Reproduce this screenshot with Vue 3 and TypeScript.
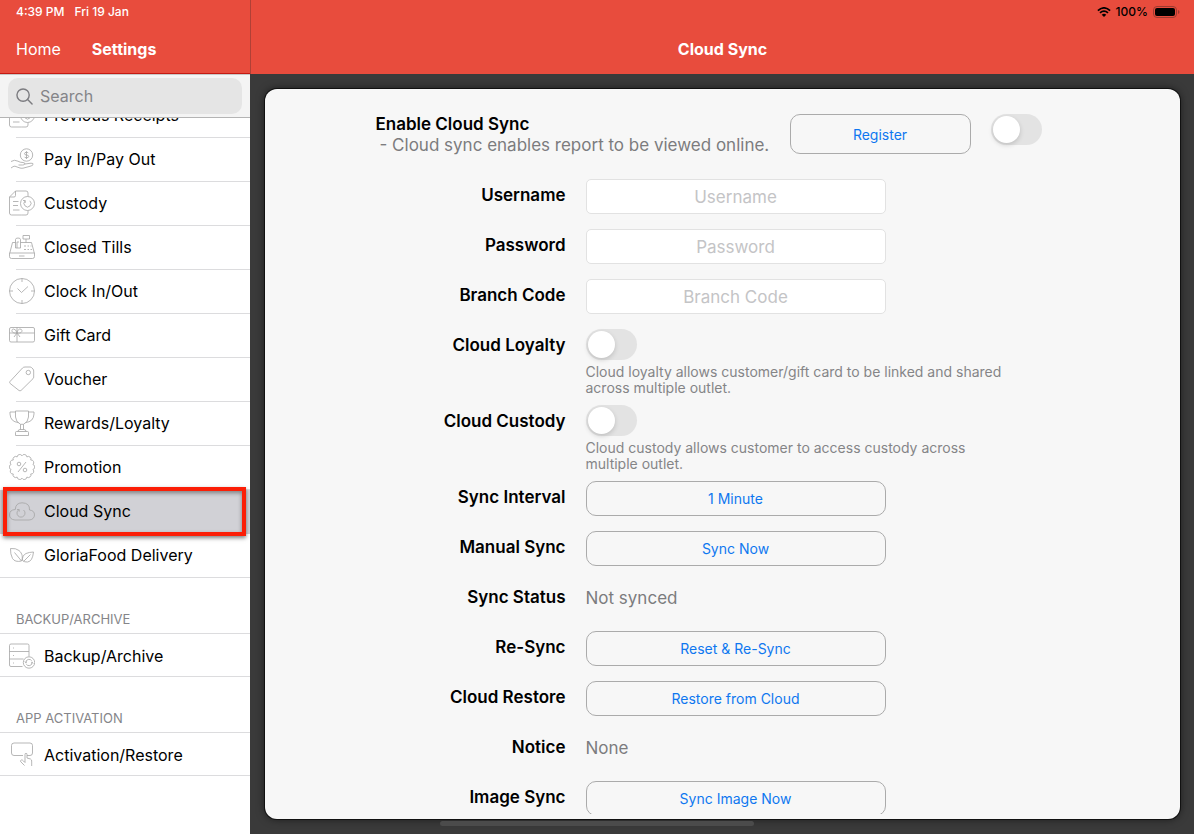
<script setup lang="ts">
import { ref } from 'vue'

interface MenuItem {
  label: string
  icon: string
  active?: boolean
}

interface MenuGroup {
  title?: string
  items: MenuItem[]
}

interface FormRow {
  id: string
  label: string
  kind: 'input' | 'switch' | 'button' | 'text'
  text: string
}

const circle = (cx: number, cy: number, r: number): string =>
  `M${cx - r} ${cy}a${r} ${r} 0 1 0 ${2 * r} 0a${r} ${r} 0 1 0 ${-2 * r} 0`

const scallop = (cx: number, cy: number, r: number, lobes: number): string => {
  const point = (i: number): string => {
    const a = (i / lobes) * 2 * Math.PI - Math.PI / 2
    return `${(cx + r * Math.cos(a)).toFixed(2)} ${(cy + r * Math.sin(a)).toFixed(2)}`
  }
  let d = `M${point(0)}`
  for (let i = 1; i <= lobes; i++) d += `A2.6 2.6 0 0 1 ${point(i)}`
  return d
}

const documentIcon =
  'M12.5 25H2.5Q.5 25 .5 23V7L6.5 1H17Q19 1 19 3V6.500M6.500 1V5.500Q6.500 7 5 7H.5M19 20.500V23Q19 25 17 25H12.500M4 11.500H9.500M4 15.500H9M4 20H10.500' +
  circle(18.5, 13.5, 7) +
  'M16.200 10.800A3.500 3.500 0 1 0 20.800 10.800M16.200 13V10.500H14'

const groups: MenuGroup[] = [
  {
    items: [
      { label: 'Previous Receipts', icon: documentIcon },
      {
        label: 'Pay In/Pay Out',
        icon:
          circle(17.5, 9, 6.2) +
          'M19.500 7.200Q19.200 6.300 17.500 6.300Q15.500 6.300 15.500 7.700Q15.500 9 17.500 9Q19.700 9 19.700 10.400Q19.700 11.800 17.500 11.800Q15.700 11.800 15.400 10.800M17.500 5.200V13M2 15.500Q5.500 13.200 9 15.200Q11 16.500 14 16.500Q16.500 16.700 15.800 18.200Q15.400 19 13.500 19H9.500M16 18L22 17.200Q24.700 17 24 18.700Q23.500 19.700 21 20.300L14 22.200Q12 22.500 10 21.700L6 20.200Q5 20 4 20.700L2 22'
      },
      { label: 'Custody', icon: documentIcon },
      {
        label: 'Closed Tills',
        icon: 'M.5 19H25.500V22.500Q25.500 24.500 23.500 24.500H2.500Q.5 24.500 .5 22.500ZM.8 19L3.500 8.500H6.500M11.500 8.500H22.500L25.300 19M6.500 14V5.500Q6.500 4 9 4Q11.500 4 11.500 5.500V14ZM8 14V8H10M14 1.500H20.500V5H14ZM17 5V8.500M10 22H15.500M15 12H17M18.500 12H20M21.500 12H22.500M15 15.500H17M18.500 15.500H20M21.500 15.500H23'
      },
      {
        label: 'Clock In/Out',
        icon: circle(13, 13, 12.5) + 'M13 .5V4M13 22V25.500M.5 13H4M22 13H25.500M8.500 10.500L12.500 14.500L19 8.500'
      },
      {
        label: 'Gift Card',
        icon: 'M2 5.500H24Q25.500 5.500 25.500 7V18.500Q25.500 20 24 20H2Q.5 20 .5 18.500V7Q.5 5.500 2 5.500ZM.5 11H25.500M8 5.500V20M8 11C2 12 2 7 4.500 7Q7 7 8 11C9 7 10.500 7 11 7C14 7 14 12 8 11M8 11L5 15M8 11L11 15'
      },
      {
        label: 'Voucher',
        icon: 'M1 15.500L13.500 2Q14.500 1 16 1H21Q22 1 22.700 1.700L24 3Q24.700 4 24.700 5V11Q24.700 12 24 12.700L12 24.500Q11 25.200 10 24.500L1.200 17.500Q.2 16.500 1 15.500Z' + circle(19.3, 6.5, 2.2)
      },
      {
        label: 'Rewards/Loyalty',
        icon: 'M6.500 1H19.500V7Q19 12.500 14.500 14.300V19.500M6.500 1V7Q7 12.500 11.500 14.300V19.500M6.500 2H1V4Q1.500 12 9.500 12.500M19.500 2H25V4Q24.500 12 16.500 12.500M11.500 14.300H14.500M9 21.500Q9 19.500 11 19.500H15Q17 19.500 17 21.500M7.500 21.500H18.500Q19.500 21.500 19.500 22.500V25.500H6.500V22.500Q6.500 21.500 7.500 21.500Z'
      },
      {
        label: 'Promotion',
        icon: scallop(13, 13, 11.2, 14) + circle(10, 10, 1.8) + circle(16, 16, 1.8) + 'M17 8L9 18'
      },
      {
        label: 'Cloud Sync',
        icon:
          'M6 22H20C23.500 22 25.500 19.500 25.500 17Q25.500 12.500 20.500 12Q21 5 13 4.800Q6.500 5 6.300 11.500Q.5 11.800 .5 17Q.7 21.500 6 22Z' +
          'M9.500 12A4 4 0 1 0 14.500 12M8 11.500H10.200V13.700',
        active: true
      },
      {
        label: 'GloriaFood Delivery',
        icon: 'M1.500 6.500Q7 6 10 8.500C13.500 11.500 14 15.500 12.500 19Q6 20.500 3.500 16.500Q1.200 12 1.500 6.500ZM5.500 10.500L12.500 19M24.500 10Q23.500 19.500 18.500 20Q15.500 20.300 13.500 18.500Q13 13.500 17 11.500Q20 10.200 24.500 10ZM21.500 12.500L14.500 19.500'
      }
    ]
  },
  {
    title: 'BACKUP/ARCHIVE',
    items: [
      {
        label: 'Backup/Archive',
        icon:
          'M13.500 23.500H2Q.5 23.500 .5 22V2.500Q.5 1 2 1H18.500Q20 1 20 2.500V13.500M.5 8.500H20M.5 16H14.500M4 5H5M4 12.500H5M4 20H5' +
          circle(20, 19.5, 5.7) +
          'M16.800 19.500A3.200 3.200 0 0 1 22.800 18M23.200 19.500A3.200 3.200 0 0 1 17.200 21M15.800 18.500L16.800 19.800L18 18.700M22 20.300L23.200 19.200L24.200 20.500'
      }
    ]
  },
  {
    title: 'APP ACTIVATION',
    items: [
      {
        label: 'Activation/Restore',
        icon: 'M14 13.500H5Q2.500 13.500 2.500 11V3.500Q2.500 1 5 1H21Q23.500 1 23.500 3.500V11Q23.500 13.500 21 13.500H18M15.500 23.500L11.700 19.700Q11 18.500 12.300 18Q13.500 17.700 14.500 19L16 20.500V12.500Q16 11.300 17 11.300Q18 11.300 18 12.500V16L21.500 17Q23 17.500 22.700 20V24'
      }
    ]
  }
]

const rows: FormRow[] = [
  { id: 'username', label: 'Username', kind: 'input', text: 'Username' },
  { id: 'password', label: 'Password', kind: 'input', text: 'Password' },
  { id: 'branch', label: 'Branch Code', kind: 'input', text: 'Branch Code' },
  {
    id: 'loyalty',
    label: 'Cloud Loyalty',
    kind: 'switch',
    text: 'Cloud loyalty allows customer/gift card to be linked and shared across multiple outlet.'
  },
  {
    id: 'custody',
    label: 'Cloud Custody',
    kind: 'switch',
    text: 'Cloud custody allows customer to access custody across multiple outlet.'
  },
  { id: 'interval', label: 'Sync Interval', kind: 'button', text: '1 Minute' },
  { id: 'manual', label: 'Manual Sync', kind: 'button', text: 'Sync Now' },
  { id: 'status', label: 'Sync Status', kind: 'text', text: 'Not synced' },
  { id: 'resync', label: 'Re-Sync', kind: 'button', text: 'Reset & Re-Sync' },
  { id: 'restore', label: 'Cloud Restore', kind: 'button', text: 'Restore from Cloud' },
  { id: 'notice', label: 'Notice', kind: 'text', text: 'None' },
  { id: 'image', label: 'Image Sync', kind: 'button', text: 'Sync Image Now' }
]

const search = ref('')
const fields = ref<Record<string, string>>({ username: '', password: '', branch: '' })
const switches = ref<Record<string, boolean>>({ enable: false, loyalty: false, custody: false })
</script>

<template>
  <div class="screen">
    <aside class="sidebar">
      <header class="bar">
        <div class="status"><span>4:39 PM</span><span>Fri 19 Jan</span></div>
        <div class="nav">
          <a class="home" href="#home">Home</a>
          <h1 class="heading">Settings</h1>
        </div>
      </header>
      <div class="search">
        <label class="search-box">
          <svg class="search-icon" viewBox="0 0 18 18" aria-hidden="true">
            <circle cx="7.500" cy="7.500" r="6.500" />
            <path d="M12.300 12.300L17 17" />
          </svg>
          <input v-model="search" class="search-input" type="text" placeholder="Search" aria-label="Search" />
        </label>
      </div>
      <nav class="menu">
        <div class="menu-content">
          <section v-for="(group, g) in groups" :key="g" class="group">
            <h2 v-if="group.title" class="group-title">{{ group.title }}</h2>
            <ul class="list">
              <li v-for="item in group.items" :key="item.label" class="item" :class="{ active: item.active }">
                <a class="link" href="#">
                  <svg class="icon" viewBox="0 0 26 26" aria-hidden="true"><path :d="item.icon" /></svg>
                  <span class="link-text">{{ item.label }}</span>
                </a>
              </li>
            </ul>
          </section>
        </div>
      </nav>
    </aside>

    <main class="main">
      <header class="bar">
        <div class="status right">
          <svg class="wifi" viewBox="0 0 14 10" aria-hidden="true">
            <path d="M.9 3.600Q7-1.800 13.100 3.600M3 5.900Q7 2.400 11 5.900" />
            <path class="solid" d="M4.700 7.700Q7 5.900 9.300 7.700L7 10Z" />
          </svg>
          <span class="percent">100%</span>
          <svg class="battery" viewBox="0 0 27 12" aria-hidden="true">
            <rect class="shell" x=".5" y=".5" width="23" height="11" rx="3.500" />
            <rect x="2" y="2" width="20" height="8" rx="2" />
            <path class="tip" d="M25 4Q26.500 4.500 26.500 6Q26.500 7.500 25 8Z" />
          </svg>
        </div>
        <div class="nav centered"><h1 class="heading">Cloud Sync</h1></div>
      </header>
      <div class="stage">
        <div class="card">
          <form class="form" @submit.prevent>
            <div class="enable">
              <div class="enable-text">
                <label class="enable-title" for="enable">Enable Cloud Sync</label>
                <p class="enable-note">- Cloud sync enables report to be viewed online.</p>
              </div>
              <button class="button register" type="button">Register</button>
              <input id="enable" v-model="switches.enable" class="switch" type="checkbox" role="switch" />
            </div>
            <div v-for="row in rows" :key="row.id" class="row" :class="{ tall: row.kind === 'switch' }">
              <label v-if="row.kind === 'input' || row.kind === 'switch'" class="label" :for="row.id">{{ row.label }}</label>
              <span v-else :id="row.id + '-label'" class="label">{{ row.label }}</span>
              <input
                v-if="row.kind === 'input'"
                :id="row.id"
                v-model="fields[row.id]"
                class="field"
                :type="row.id === 'password' ? 'password' : 'text'"
                :placeholder="row.text"
              />
              <div v-else-if="row.kind === 'switch'">
                <input :id="row.id" v-model="switches[row.id]" class="switch" type="checkbox" role="switch" />
                <p class="help">{{ row.text }}</p>
              </div>
              <button v-else-if="row.kind === 'button'" class="button" type="button" :aria-describedby="row.id + '-label'">
                {{ row.text }}
              </button>
              <span v-else class="value">{{ row.text }}</span>
            </div>
          </form>
        </div>
      </div>
    </main>
    <div class="home-indicator"></div>
  </div>
</template>

<style>
body {
  margin: 0;
}
</style>

<style scoped>
* {
  box-sizing: border-box;
}

.screen {
  display: grid;
  grid-template-columns: 250px minmax(0, 1fr);
  height: 100vh;
  overflow: hidden;
  background: #3a3a3a;
  color: #000;
  font-family: Inter, "Liberation Sans", sans-serif;
  font-size: 16px;
}

.sidebar,
.main {
  display: flex;
  flex-direction: column;
  min-height: 0;
}

.sidebar {
  background: #fff;
}

.bar {
  flex: none;
  height: 74px;
  background: #e84c3d;
  color: #fff;
}

.sidebar .bar {
  border-bottom: 1px solid #c41a12;
}

.main .bar {
  border-left: 1px solid #b04036;
}

.status {
  display: flex;
  gap: 10px;
  height: 24px;
  padding: 0 16px;
  font-size: 12px;
  font-weight: 500;
  line-height: 24px;
}

.status.right {
  justify-content: flex-end;
  align-items: center;
  gap: 5px;
  padding-right: 14px;
  color: #000;
}

.wifi {
  width: 14px;
  height: 10px;
  fill: none;
  stroke: #000;
  stroke-width: 1.8;
}

.wifi .solid {
  fill: #000;
  stroke: none;
}

.battery {
  width: 27px;
  height: 12px;
}

.shell {
  fill: none;
  stroke: #9c3a30;
}

.tip {
  fill: #9c3a30;
}

.nav {
  display: flex;
  align-items: center;
  gap: 31px;
  height: 50px;
  padding: 0 16px;
}

.nav.centered {
  justify-content: center;
}

.home {
  color: #fff;
  text-decoration: none;
}

.heading {
  margin: 0;
  font-size: 16px;
  font-weight: 700;
}

.search {
  flex: none;
  height: 44px;
  padding: 3px 8px;
  border-top: 1px solid #c8c8c8;
  border-bottom: 1px solid #b4b4b4;
  background: #f4f4f4;
}

.search-box {
  display: flex;
  align-items: center;
  gap: 7px;
  height: 36px;
  padding: 0 8px;
  border-radius: 10px;
  background: #e5e5e5;
}

.search-icon {
  flex: none;
  width: 17px;
  height: 17px;
  fill: none;
  stroke: #7c7c80;
  stroke-width: 1.5;
  stroke-linecap: round;
}

.search-input {
  width: 100%;
  min-width: 0;
  padding: 0;
  border: 0;
  outline: 0;
  background: none;
  color: #000;
  font: inherit;
}

.search-input::placeholder {
  color: #848488;
}

.menu {
  flex: 1;
  min-height: 0;
  overflow: hidden;
}

.menu-content {
  margin-top: -24px;
}

.group-title {
  height: 56px;
  margin: 0;
  padding: 31px 16px 0;
  border-bottom: 1px solid #dcdcde;
  color: #858589;
  font-size: 13px;
  font-weight: 400;
  line-height: 20px;
}

.list {
  margin: 0;
  padding: 0;
  list-style: none;
}

.item {
  position: relative;
}

.link {
  display: flex;
  align-items: center;
  gap: 9px;
  height: 44px;
  padding: 0 0 2px 9px;
  background: linear-gradient(#dcdcde, #dcdcde) right bottom / calc(100% - 16px) 1px no-repeat;
  color: #000;
  text-decoration: none;
}

.group-title + .list .link {
  height: 43px;
  padding-bottom: 0;
}

.item:last-child .link {
  background-size: 100% 1px;
}

.item.active .link {
  background: #d1d1d6;
}

.item.active::after {
  content: "";
  position: absolute;
  inset: -3px 4px -2px 3px;
  border: 4px solid #fb1e06;
  box-shadow: 0 2px 4px rgba(0, 0, 0, 0.5), inset 0 2px 4px rgba(0, 0, 0, 0.4);
  pointer-events: none;
}

.icon {
  flex: none;
  width: 26px;
  height: 26px;
  fill: none;
  stroke: #a4a4a4;
  stroke-width: 0.8;
  stroke-linejoin: round;
}

.stage {
  display: flex;
  flex: 1;
  min-height: 0;
  padding: 15px 14px 15px 15px;
}

.card {
  display: flex;
  flex: 1;
  min-width: 0;
  padding-bottom: 5px;
  border-radius: 12px;
  background: #f7f7f7;
  box-shadow: 0 0 0 1px #111, 0 0 8px rgba(0, 0, 0, 0.6);
}

.form {
  flex: 1;
  min-width: 0;
  padding: 25px max(20px, calc(50% - 347px)) 0;
  overflow-y: auto;
  scrollbar-width: none;
}

.enable {
  display: flex;
  align-items: flex-start;
  height: 65px;
}

.enable-text {
  width: 414px;
}

.enable-title {
  display: block;
  font-size: 17px;
  font-weight: 600;
  line-height: 21px;
}

.enable-note {
  margin: 0;
  padding-left: 4px;
  color: #7c7c7e;
  font-size: 17px;
  line-height: 21px;
  white-space: nowrap;
}

.register {
  width: 181px;
  height: 40px;
  margin-right: 20px;
}

.row {
  display: grid;
  grid-template-columns: 190px minmax(0, 1fr);
  column-gap: 20px;
  align-items: start;
  height: 50px;
}

.row.tall {
  height: 76px;
}

.label {
  font-size: 17px;
  font-weight: 600;
  line-height: 32px;
  text-align: right;
}

.field,
.row .button {
  width: 300px;
  height: 35px;
}

.field {
  padding: 0 8px;
  border: 1px solid #e2e2e2;
  border-radius: 5px;
  outline: 0;
  background: #fff;
  font-family: inherit;
  font-size: 17px;
  text-align: center;
}

.field::placeholder {
  color: #c4c4c6;
}

.button {
  padding: 0;
  border: 1px solid #ababab;
  border-radius: 10px;
  background: none;
  color: #0f77f0;
  font-family: inherit;
  font-size: 14px;
}

.switch {
  display: block;
  flex: none;
  width: 51px;
  height: 31px;
  margin: 0;
  border-radius: 16px;
  background: #e3e3e3;
  appearance: none;
}

.switch::before {
  content: "";
  display: block;
  width: 27px;
  height: 27px;
  margin: 2px;
  border-radius: 50%;
  background: #fff;
  box-shadow: 0 2px 5px rgba(0, 0, 0, 0.16);
}

.switch:checked {
  background: #34c759;
}

.switch:checked::before {
  margin-left: 22px;
}

.help {
  max-width: 420px;
  margin: 4px 0 0;
  color: #858587;
  font-size: 14px;
  line-height: 16px;
}

.value {
  color: #7c7c7e;
  font-size: 17px;
  line-height: 35px;
}

.home-indicator {
  position: fixed;
  bottom: 8px;
  left: 50%;
  width: 314px;
  height: 5px;
  margin-left: -157px;
  border-radius: 3px;
  background: #4b4b4b;
}
</style>
